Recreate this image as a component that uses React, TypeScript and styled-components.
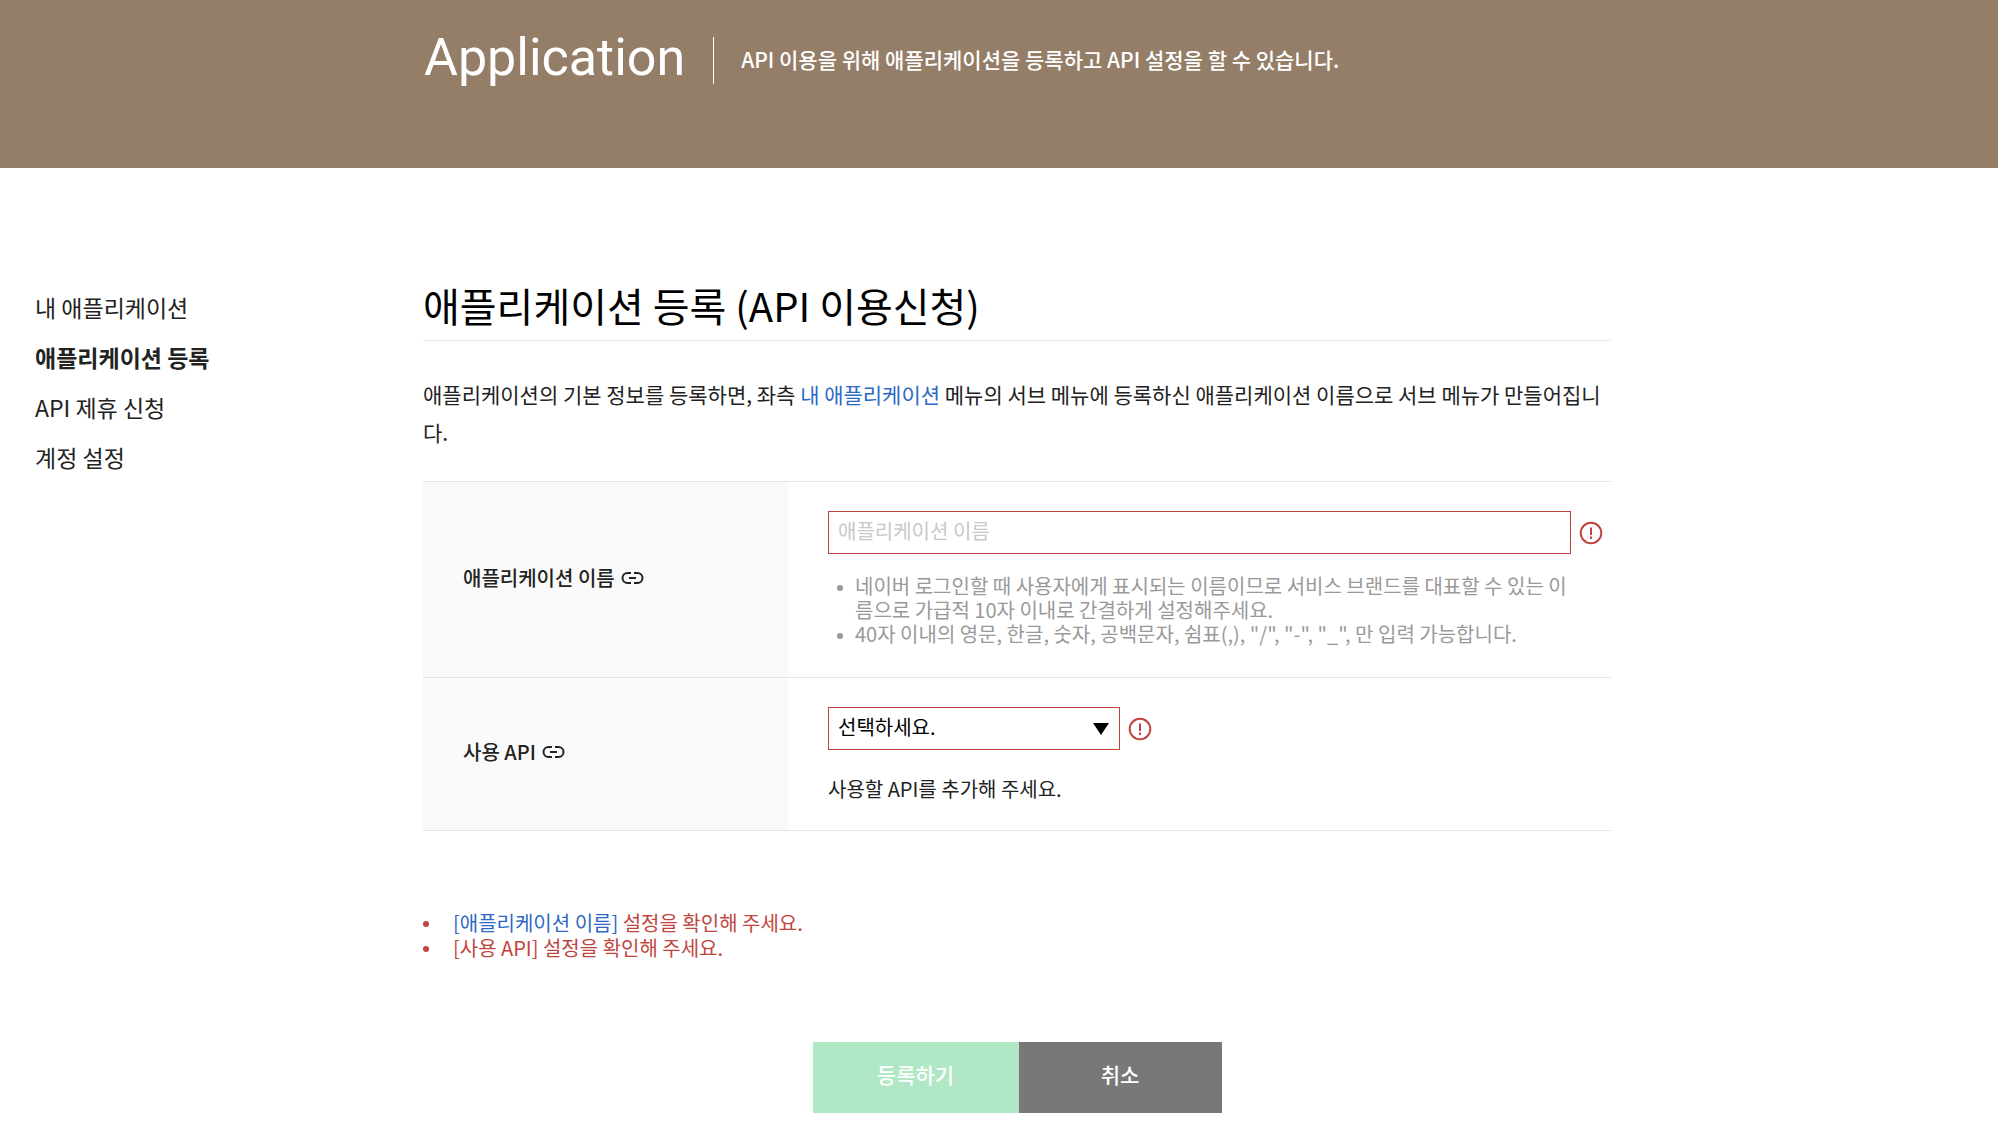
import React from "react";
import styled, { createGlobalStyle } from "styled-components";

const red = "#c1453f";
const blue = "#2c69c4";
const line = "#e5e5e5";

const GlobalStyle = createGlobalStyle`
  *, *::before, *::after { box-sizing: border-box; }
  body {
    margin: 0;
    background: #fff;
    color: #222;
    font-family: "Noto Sans CJK KR", sans-serif;
    font-size: 20px;
    line-height: 24px;
  }
  h1, h2, p, ul { margin: 0; padding: 0; }
  ul { list-style: none; }
  button, input, select { font: inherit; border-radius: 0; }
`;

const Banner = styled.header`
  display: flex;
  align-items: flex-start;
  height: 168px;
  padding: 28px 24px 0 424px;
  background: #957e68;
  color: #fff;
`;

const BannerTitle = styled.h1`
  padding-right: 28px;
  font-family: Roboto, "Noto Sans CJK KR", sans-serif;
  font-size: 52px;
  font-weight: 400;
  line-height: 60px;
`;

const BannerText = styled.p`
  margin-top: 9px;
  padding: 0 0 3px 27px;
  border-left: 1px solid #fff;
  font-size: 21px;
  font-weight: 500;
  line-height: 44px;
`;

const Page = styled.div`
  display: grid;
  grid-template-columns: 388px minmax(0, 1188px);
  padding: 109px 24px 11px 35px;
`;

const SideMenu = styled.ul`
  padding-top: 5px;
`;

const SideLink = styled.a<{ $current?: boolean }>`
  display: block;
  color: #222;
  font-size: 23px;
  font-weight: ${(p) => (p.$current ? 700 : 400)};
  line-height: 50px;
  text-decoration: none;
`;

const TextLink = styled.a`
  color: ${blue};
  text-decoration: none;
`;

const Title = styled.h2`
  padding-bottom: 7px;
  border-bottom: 1px solid ${line};
  color: #000;
  font-size: 40px;
  font-weight: 400;
  line-height: 56px;
`;

const Intro = styled.p`
  margin: 34px 0 30px;
  font-size: 21px;
  line-height: 38px;
  word-break: break-all;
`;

const FormTable = styled.table`
  width: 100%;
  border-collapse: collapse;
  border-top: 1px solid ${line};
  table-layout: fixed;
`;

const FormRow = styled.tr`
  border-bottom: 1px solid ${line};
`;

const HeadCell = styled.th`
  width: 365px;
  padding: 0 40px 4px;
  background: #fafafa;
  text-align: left;
  font-weight: 500;
`;

const HeadLabel = styled.span`
  display: flex;
  align-items: center;
  gap: 6px;
`;

const FieldCell = styled.td`
  padding: 29px 8px 29px 40px;
  vertical-align: top;
`;

const FieldLine = styled.div`
  display: flex;
  align-items: center;
  gap: 8px;
`;

const TextInput = styled.input`
  flex: 1;
  min-width: 0;
  height: 43px;
  padding: 0 9px 4px;
  border: 1px solid ${red};
  background: #fff;
  outline: none;
  &::placeholder { color: #c8c8c8; opacity: 1; }
`;

const SelectWrap = styled.div`
  position: relative;
  width: 292px;
`;

const Select = styled.select`
  display: block;
  width: 100%;
  height: 43px;
  padding: 0 40px 4px 9px;
  border: 1px solid ${red};
  background: #fff;
  color: #000;
  appearance: none;
`;

const SelectArrow = styled.svg`
  position: absolute;
  top: 16px;
  right: 11px;
  pointer-events: none;
`;

const Hints = styled.ul`
  margin-top: 20px;
  padding: 0 28px 2px 27px;
  color: #999;
  word-break: break-all;
`;

const Hint = styled.li`
  position: relative;
  &::before {
    content: "";
    position: absolute;
    left: -18px;
    top: 11px;
    width: 6px;
    height: 6px;
    border-radius: 50%;
    background: currentColor;
  }
`;

const Note = styled.p`
  margin-top: 27px;
`;

const Errors = styled.ul`
  margin-top: 79px;
  padding-left: 30px;
  color: ${red};
  line-height: 25px;
`;

const ErrorItem = styled(Hint)`
  &::before { left: -30px; }
`;

const Actions = styled.div`
  display: flex;
  justify-content: center;
  margin-top: 82px;
`;

const ActionButton = styled.button<{ $primary?: boolean }>`
  width: ${(p) => (p.$primary ? 206 : 203)}px;
  height: 71px;
  padding: 0 0 8px;
  border: 0;
  background: ${(p) => (p.$primary ? "#b0e8c5" : "#787878")};
  color: #fff;
  font-size: 21px;
  font-weight: 500;
`;

const LinkIcon = () => (
  <svg width="23" height="14" viewBox="0 0 23 14" fill="none" stroke="#222" strokeWidth="2" aria-hidden="true">
    <path d="M10 2H6.500a5 5 0 0 0 0 10H10M13 2H16.500a5 5 0 0 1 0 10H13M8 7H15" />
  </svg>
);

const AlertIcon = () => (
  <svg width="24" height="24" viewBox="0 0 24 24" fill="none" stroke={red} strokeWidth="2" aria-hidden="true">
    <circle cx="12" cy="12" r="10.300" />
    <path d="M12 6.500V14M12 15.500V18" />
  </svg>
);

export default function App() {
  return (
    <>
      <GlobalStyle />
      <Banner>
        <BannerTitle>Application</BannerTitle>
        <BannerText>API 이용을 위해 애플리케이션을 등록하고 API 설정을 할 수 있습니다.</BannerText>
      </Banner>
      <Page>
        <nav>
          <SideMenu>
            <li><SideLink href="#apps">내 애플리케이션</SideLink></li>
            <li><SideLink href="#register" $current aria-current="page">애플리케이션 등록</SideLink></li>
            <li><SideLink href="#partner">API 제휴 신청</SideLink></li>
            <li><SideLink href="#account">계정 설정</SideLink></li>
          </SideMenu>
        </nav>
        <main>
          <Title>애플리케이션 등록 (API 이용신청)</Title>
          <Intro>
            애플리케이션의 기본 정보를 등록하면, 좌측 <TextLink href="#apps">내 애플리케이션</TextLink> 메뉴의 서브 메뉴에
            등록하신 애플리케이션 이름으로 서브 메뉴가 만들어집니다.
          </Intro>
          <form onSubmit={(e) => e.preventDefault()}>
            <FormTable>
              <tbody>
                <FormRow>
                  <HeadCell scope="row">
                    <HeadLabel><label htmlFor="app-name">애플리케이션 이름</label><LinkIcon /></HeadLabel>
                  </HeadCell>
                  <FieldCell>
                    <FieldLine>
                      <TextInput id="app-name" type="text" placeholder="애플리케이션 이름" />
                      <AlertIcon />
                    </FieldLine>
                    <Hints>
                      <Hint>네이버 로그인할 때 사용자에게 표시되는 이름이므로 서비스 브랜드를 대표할 수 있는 이름으로 가급적 10자 이내로 간결하게 설정해주세요.</Hint>
                      <Hint>40자 이내의 영문, 한글, 숫자, 공백문자, 쉼표(,), "/", "-", "_", 만 입력 가능합니다.</Hint>
                    </Hints>
                  </FieldCell>
                </FormRow>
                <FormRow>
                  <HeadCell scope="row">
                    <HeadLabel><label htmlFor="use-api">사용 API</label><LinkIcon /></HeadLabel>
                  </HeadCell>
                  <FieldCell>
                    <FieldLine>
                      <SelectWrap>
                        <Select id="use-api"><option>선택하세요.</option></Select>
                        <SelectArrow width="16" height="12" viewBox="0 0 16 12" aria-hidden="true">
                          <path d="M0 0H16L8 12Z" fill="#000" />
                        </SelectArrow>
                      </SelectWrap>
                      <AlertIcon />
                    </FieldLine>
                    <Note>사용할 API를 추가해 주세요.</Note>
                  </FieldCell>
                </FormRow>
              </tbody>
            </FormTable>
            <Errors>
              <ErrorItem><TextLink href="#app-name">[애플리케이션 이름]</TextLink> 설정을 확인해 주세요.</ErrorItem>
              <ErrorItem>[사용 API] 설정을 확인해 주세요.</ErrorItem>
            </Errors>
            <Actions>
              <ActionButton type="submit" $primary>등록하기</ActionButton>
              <ActionButton type="button">취소</ActionButton>
            </Actions>
          </form>
        </main>
      </Page>
    </>
  );
}
